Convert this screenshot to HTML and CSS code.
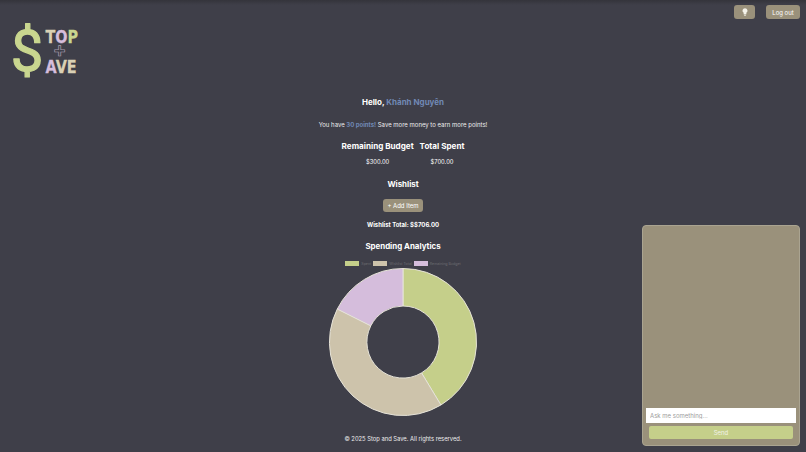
FILE: index.html
```html
<!DOCTYPE html>
<html lang="en">
<head>
    <meta charset="UTF-8">
    <meta name="viewport" content="width=device-width, initial-scale=1.0">
    <title>Stop and Save</title>
    <link rel="stylesheet" href="styles.css">
</head>
<body>
    <div class="header">
        <div class="logo">
            <svg class="logo-dollar" width="34" height="70" viewBox="0 0 34 70">
                <text x="17" y="55" text-anchor="middle">$</text>
            </svg>
            <div class="logo-words">
                <div class="logo-line"><span class="c-beige">T</span><span class="c-purple">O</span><span class="c-green">P</span></div>
                <div class="logo-plus">+</div>
                <div class="logo-line"><span class="c-purple">A</span><span class="c-beige">V</span><span class="c-beige">E</span></div>
            </div>
        </div>
        <div class="header-actions">
            <button class="btn btn-icon">
                <svg width="6" height="8" viewBox="0 0 7 9"><path d="M3.5 0a3 3 0 0 1 1.6 5.5V7H1.9V5.5A3 3 0 0 1 3.5 0zM2.2 7.6h2.6v.6L4 9H3l-.8-.8z" fill="#f5f3ea"/></svg>
            </button>
            <button class="btn btn-logout">Log out</button>
        </div>
    </div>

    <div class="main-content">
        <h2 class="greeting">Hello, <span class="accent">Khánh Nguyên</span></h2>
        <p class="points">You have <span class="accent strong">30 points!</span> Save more money to earn more points!</p>

        <div class="stats">
            <div class="stat">
                <h3>Remaining Budget</h3>
                <p>$300.00</p>
            </div>
            <div class="stat">
                <h3>Total Spent</h3>
                <p>$700.00</p>
            </div>
        </div>

        <h3 class="section-title">Wishlist</h3>
        <button class="btn btn-add">+ Add Item</button>
        <p class="wishlist-total">Wishlist Total: $$706.00</p>

        <h3 class="section-title analytics">Spending Analytics</h3>
        <div class="legend">
            <span class="swatch c-spent"></span><span class="legend-label">Spent</span>
            <span class="swatch c-wish"></span><span class="legend-label">Wishlist Total</span>
            <span class="swatch c-left"></span><span class="legend-label">Remaining Budget</span>
        </div>
        <svg class="donut" width="150" height="150" viewBox="0 0 150 150">
            <path d="M75 1.5A73.5 73.5 0 0 1 112.9 138L93.5 105.9A36 36 0 0 0 75 39z" fill="#c5cf8a"/>
            <path d="M112.9 138A73.5 73.5 0 0 1 9.3 42L42.8 58.8A36 36 0 0 0 93.5 105.9z" fill="#cdc3ab"/>
            <path d="M9.3 42A73.5 73.5 0 0 1 75 1.5V39A36 36 0 0 0 42.8 58.8z" fill="#d5bddc"/>
        </svg>

        <p class="footer">© 2025 Stop and Save. All rights reserved.</p>
    </div>

    <div class="chat-box">
        <div class="chat-messages"></div>
        <input class="chat-input" type="text" placeholder="Ask me something...">
        <button class="chat-send">Send</button>
    </div>
</body>
</html>
```

FILE: styles.css
```css
* {
    margin: 0;
    padding: 0;
    box-sizing: border-box;
}

body {
    font-family: Inter, "Open Sans", sans-serif;
    background: #3f3f49;
    color: #ffffff;
    height: 452px;
    overflow: hidden;
    position: relative;
}

.header {
    height: 95px;
    padding: 5px 6px 0 10px;
    display: flex;
    justify-content: space-between;
    align-items: flex-start;
    background: linear-gradient(#34343b, #3f3f49 5px);
}

.logo {
    display: flex;
    margin-top: 18px;
    height: 56px;
}

.logo-dollar {
    flex: none;
    margin: -7px -2px 0 0;
}

.logo-dollar text {
    font-family: Roboto, sans-serif;
    font-size: 58px;
    fill: #c9d68f;
    stroke: #c9d68f;
    stroke-width: 1.2;
    stroke-linejoin: round;
}

.logo-words {
    margin-top: 6px;
    width: 35px;
    font-family: "DejaVu Sans", sans-serif;
    font-weight: 700;
    text-align: center;
}

.logo-line {
    font-size: 18px;
    line-height: 15px;
    white-space: nowrap;
    transform: scaleX(0.8);
    -webkit-text-stroke: 0.3px currentColor;
}

.logo-plus {
    font-family: "Liberation Sans", sans-serif;
    font-weight: 700;
    font-size: 20px;
    line-height: 15px;
    color: #3f3f49;
    -webkit-text-stroke: 0.7px #a99cb0;
}

.c-beige { color: #d9d0b4; }
.c-purple { color: #d5bddc; }
.c-green { color: #c9d68f; }

.header-actions {
    display: flex;
    gap: 11px;
}

.btn {
    border: none;
    background: #9a917b;
    color: #fff;
    font-family: inherit;
    border-radius: 3px;
}

.btn-icon {
    width: 21px;
    height: 14px;
    display: flex;
    align-items: center;
    justify-content: center;
}

.btn-logout {
    width: 34px;
    height: 14px;
    font-size: 6px;
}

.main-content {
    display: flex;
    flex-direction: column;
    align-items: center;
    text-align: center;
}

.greeting {
    font-size: 8px;
    font-weight: 700;
    line-height: 14px;
}

.accent {
    color: #7189b5;
}

.strong {
    font-weight: 700;
}

.points {
    font-size: 6px;
    line-height: 10px;
    margin-top: 11px;
    color: #eeeeee;
}

.stats {
    display: flex;
    gap: 6px;
    margin-top: 10px;
}

.stat h3 {
    font-size: 8.1px;
    font-weight: 700;
    line-height: 12px;
}

.stat p {
    font-size: 5.8px;
    line-height: 10px;
    margin-top: 5px;
}

.section-title {
    font-size: 7.9px;
    font-weight: 700;
    line-height: 12px;
    margin-top: 11px;
}

.btn-add {
    margin-top: 9px;
    width: 40px;
    height: 13px;
    font-size: 6px;
}

.wishlist-total {
    font-size: 6px;
    font-weight: 700;
    line-height: 10px;
    margin-top: 8px;
}

.analytics {
    margin-top: 10px;
}

.legend {
    display: flex;
    align-items: center;
    margin-top: 9px;
    height: 5px;
    margin-left: 2px;
}

.swatch {
    width: 14px;
    height: 5px;
}

.c-spent { background: #c5cf8a; }
.c-wish { background: #cdc3ab; }
.c-left { background: #d5bddc; }

.legend-label {
    font-size: 3.6px;
    color: #6d6d72;
    margin: 0 2px;
}

.donut {
    margin-top: 1px;
    display: block;
}

.donut path {
    stroke: #e6e3d8;
    stroke-width: 1;
}

.footer {
    font-size: 5.8px;
    line-height: 10px;
    margin-top: 17px;
    color: #eeeeee;
}

.chat-box {
    position: absolute;
    right: 6px;
    bottom: 6px;
    width: 158px;
    height: 221px;
    background: #9a917b;
    border: 1px solid #aaa491;
    border-radius: 4px;
    display: flex;
    flex-direction: column;
    align-items: center;
}

.chat-messages {
    flex: 1;
}

.chat-input {
    width: 150px;
    height: 15px;
    border: none;
    background: #fff;
    font-family: inherit;
    font-size: 6px;
    padding: 0 4px;
}

.chat-input::placeholder {
    color: #9c9c9c;
}

.chat-send {
    width: 144px;
    height: 13px;
    margin: 3px 0 6px;
    border: none;
    border-radius: 2px;
    background: #c5cf8a;
    color: #f2f2e6;
    font-family: inherit;
    font-size: 6px;
}
```
